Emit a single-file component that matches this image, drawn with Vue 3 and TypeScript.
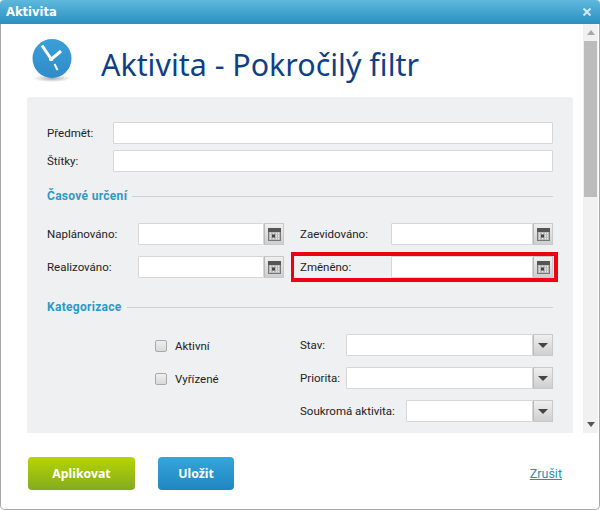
<script setup lang="ts">
const topFields = ['Předmět:', 'Štítky:']
const dateRows = [
  { label: 'Naplánováno:', marked: false },
  { label: 'Zaevidováno:', marked: false },
  { label: 'Realizováno:', marked: false },
  { label: 'Změněno:', marked: true },
]
const checks = ['Aktivní', 'Vyřízené']
const selects = [
  { label: 'Stav:', wide: false },
  { label: 'Priorita:', wide: false },
  { label: 'Soukromá aktivita:', wide: true },
]
</script>

<template>
  <div class="window">
    <header class="titlebar">
      <span class="wintitle">Aktivita</span>
      <svg class="close" width="8" height="8" viewBox="0 0 8 8" aria-label="Zavřít">
        <path d="M0.5 0.5 L7.5 7.5 M7.5 0.5 L0.5 7.5" stroke="#cfeaf6" stroke-width="2" fill="none" />
      </svg>
    </header>
    <div class="body">
      <div class="scroller">
        <div class="main">
          <div class="heading">
            <svg class="logo" width="44" height="46" viewBox="0 0 44 46">
              <defs>
                <linearGradient id="disc" x1="0" y1="0" x2="0" y2="1">
                  <stop offset="0" stop-color="#3a9fd8" />
                  <stop offset="1" stop-color="#2f8cc8" />
                </linearGradient>
                <radialGradient id="shade" cx="0.5" cy="0.5" r="0.5">
                  <stop offset="0" stop-color="#8a8a8a" stop-opacity="0.7" />
                  <stop offset="1" stop-color="#8a8a8a" stop-opacity="0" />
                </radialGradient>
              </defs>
              <ellipse cx="22" cy="40.5" rx="19" ry="3.5" fill="url(#shade)" />
              <circle cx="22" cy="20.5" r="19.5" fill="url(#disc)" />
              <path d="M12 7.5 L20.5 20 M31 13 L21 21.5" stroke="#fff" stroke-width="3" fill="none" />
              <path d="M24.5 26 L27.5 32" stroke="#fff" stroke-width="2" fill="none" />
              <circle cx="21" cy="21" r="2.2" fill="#fff" />
            </svg>
            <h1>Aktivita - Pokročilý filtr</h1>
          </div>
          <section class="panel">
            <div class="stack">
              <div v-for="f in topFields" :key="f" class="line">
                <label class="lab top">{{ f }}</label>
                <div class="input grow"></div>
              </div>
            </div>

            <div class="section first"><span>Časové určení</span><i></i></div>
            <div class="dates">
              <div v-for="r in dateRows" :key="r.label" class="line" :class="{ marked: r.marked }">
                <label class="lab date">{{ r.label }}</label>
                <div class="input grow"></div>
                <span class="addon">
                  <svg width="13" height="13" viewBox="0 0 13 13">
                    <rect x="0.5" y="0.5" width="12" height="12" fill="#b8b8b8" stroke="#777" />
                    <rect x="0" y="0" width="13" height="4" fill="#555" />
                    <path d="M2 5.5 H3 M5 5.5 H6 M8 5.5 H9 M2 8 H3 M8 8 H9 M2 10.5 H3 M5 10.5 H6 M8 10.5 H9 M10 5.5 H11 M10 8 H11 M10 10.5 H11" stroke="#ececec" stroke-width="1.4" fill="none" />
                    <rect x="4" y="6.5" width="3" height="3" fill="#444" />
                  </svg>
                </span>
              </div>
            </div>

            <div class="section"><span>Kategorizace</span><i></i></div>
            <div class="cats">
              <div class="checks">
                <label v-for="c in checks" :key="c" class="check"><span class="box"></span>{{ c }}</label>
              </div>
              <div class="selects">
                <div v-for="s in selects" :key="s.label" class="line">
                  <label class="lab sel" :class="{ wide: s.wide }">{{ s.label }}</label>
                  <div class="input grow"></div>
                  <span class="addon">
                    <svg width="10" height="5" viewBox="0 0 10 5">
                      <path d="M0 0 H10 L5 5 Z" fill="#444" />
                    </svg>
                  </span>
                </div>
              </div>
            </div>
          </section>
        </div>
        <div class="scrollbar">
          <span class="arrow up"></span>
          <span class="thumb"></span>
          <span class="arrow down"></span>
        </div>
      </div>
      <footer class="footer">
        <button class="btn green">Aplikovat</button>
        <button class="btn blue">Uložit</button>
        <a class="cancel" href="#">Zrušit</a>
      </footer>
    </div>
  </div>
</template>

<style>
html, body { margin: 0; background: #fff; }
</style>

<style scoped>
.window {
  width: 600px;
  height: 510px;
  display: flex;
  flex-direction: column;
  font-family: Roboto, "Noto Sans", sans-serif;
  font-size: 11.5px;
  color: #222;
  box-sizing: border-box;
}
.titlebar {
  height: 24px;
  flex: none;
  display: flex;
  align-items: center;
  justify-content: space-between;
  padding: 0 9px 0 6px;
  background: linear-gradient(#5fb8de, #2a90bf);
  border-radius: 4px 4px 0 0;
}
.wintitle { color: #fff; font-family: "DejaVu Sans", sans-serif; font-weight: 700; font-size: 11.5px; }
.body {
  flex: 1;
  display: flex;
  flex-direction: column;
  min-height: 0;
  border: 1px solid #a8a8a8;
  border-top: 0;
  border-radius: 0 0 5px 5px;
  background: #fff;
}
.scroller { display: flex; height: 409px; flex: none; }
.main { width: 582px; flex: none; padding: 0 10px 0 26px; box-sizing: border-box; }
.heading { height: 73px; display: flex; align-items: flex-start; box-sizing: border-box; padding: 14px 0 0 3px; }
.logo { flex: none; }
.heading h1 {
  margin: 6px 0 0 27px;
  font-family: "Noto Sans", sans-serif;
  font-weight: 400;
  font-size: 30.4px;
  line-height: 42px;
  color: #0f3f86;
}
.panel {
  height: 336px;
  box-sizing: border-box;
  padding: 25px 20px 0;
  background: #eff0f2;
  border-radius: 3px 3px 0 0;
}
.stack { display: flex; flex-direction: column; gap: 6px; }
.line { display: flex; align-items: center; height: 22px; position: relative; }
.lab { flex: none; white-space: nowrap; }
.lab.top { width: 66px; }
.lab.date { width: 91px; }
.lab.sel { width: 46px; }
.lab.sel.wide { width: 106px; }
.input {
  height: 22px;
  box-sizing: border-box;
  background: #fff;
  border: 1px solid #d6d6d6;
  border-radius: 1px;
}
.grow { flex: 1; min-width: 0; }
.addon {
  flex: none;
  width: 20px;
  height: 22px;
  box-sizing: border-box;
  display: flex;
  align-items: center;
  justify-content: center;
  background: linear-gradient(#efefef, #cfcfcf);
  border: 1px solid #c8c8c8;
  border-left-color: #bbb;
}
.section {
  display: flex;
  align-items: center;
  gap: 5px;
  height: 18px;
  margin: 20px 0 18px;
  color: #2a9ac9;
  font-size: 12px;
  font-weight: 700;
  letter-spacing: 0.3px;
}
.section.first { margin-top: 15px; }
.section i { flex: 1; height: 1px; background: #cfd0d2; }
.dates {
  display: grid;
  grid-template-columns: 237px 253px;
  column-gap: 16px;
  row-gap: 11px;
}
.marked::after {
  content: "";
  position: absolute;
  inset: -4px -5px -4px -9px;
  border-style: solid;
  border-color: #ee0010;
  border-width: 4px 4px 4px 3px;
  pointer-events: none;
}
.cats { display: grid; grid-template-columns: 237px 253px; column-gap: 16px; }
.checks { display: flex; flex-direction: column; gap: 18px; padding: 4px 0 0 108px; }
.check { display: flex; align-items: center; height: 15px; gap: 8px; }
.box {
  width: 12px;
  height: 12px;
  box-sizing: border-box;
  border: 1px solid #a9a9a9;
  border-radius: 2px;
  background: linear-gradient(#efefef, #d9d9d9);
}
.selects { display: flex; flex-direction: column; gap: 11px; }
.scrollbar {
  flex: none;
  width: 15px;
  background: #f1f1f1;
  display: flex;
  flex-direction: column;
  align-items: center;
  position: relative;
}
.arrow { width: 0; height: 0; border: 4px solid transparent; position: absolute; }
.arrow.up { top: 6px; border-bottom: 5px solid #a8a8a8; border-top: 0; }
.arrow.down { bottom: 6px; border-top: 5px solid #555; border-bottom: 0; }
.thumb {
  width: 13px;
  height: 156px;
  margin-top: 17px;
  background: #bcbcbc;
}
.footer {
  flex: 1;
  display: flex;
  align-items: flex-start;
  padding: 24px 37px 0 27px;
}
.btn {
  height: 33px;
  border: 0;
  border-radius: 4px;
  color: #fff;
  font-family: "Noto Sans", sans-serif;
  font-weight: 700;
  font-size: 12.3px;
  padding: 0;
}
.green { width: 107px; background: linear-gradient(#b6d500, #84ab20); }
.blue { width: 76px; margin-left: 23px; background: linear-gradient(#37a5da, #1f86c1); }
.cancel {
  margin-left: auto;
  margin-top: 9px;
  color: #2a8fb5;
  font-size: 12.5px;
  text-decoration: underline;
}
</style>
